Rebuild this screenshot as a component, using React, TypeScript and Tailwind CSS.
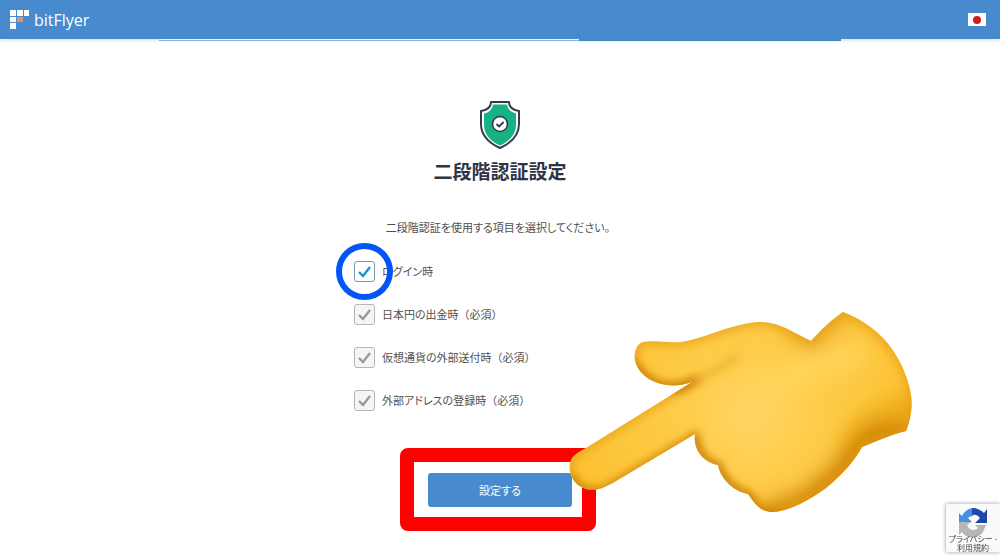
import React, {useState} from "react";

const STEPS = [
    {width: "w-[134px]", done: false},
    {width: "w-[146px]", done: false},
    {width: "w-[140px]", done: false},
    {width: "flex-1", done: true},
];

const OPTIONS = [
    {id: "login", label: "ログイン時", required: false},
    {id: "withdraw", label: "日本円の出金時", required: true},
    {id: "transfer", label: "仮想通貨の外部送付時", required: true},
    {id: "address", label: "外部アドレスの登録時", required: true},
];

const HAND = "M643 342 C655 340 666 343 681 342 C703 339 728 325 757 322 C780 321 793 333 811 341 C820 331 831 320 843 312 C862 319 882 333 894 352 C907 372 914 396 911 412 C910 420 908 426 906 431 C890 435 877 441 862 447 C855 460 843 474 826 488 C807 502 786 512 771 512 C760 511 755 504 748 494 C736 492 721 481 718 465 C704 462 693 451 695 434 L611 484 C602 489 592 492 583 488 C573 484 568 472 570 463 C572 455 579 452 586 448 L692 382 C675 388 661 386 649 379 C639 373 633 362 635 353 C636 347 639 343 643 342 Z";

const LogoMark = () => (
    <svg width="20" height="20" viewBox="0 0 20 20" fill="#fff">
        <path d="M0 0h6v6H0zM7 0h6v6H7zM14 0h5v6h-5zM0 7h6v5H0zM0 13h6v6H0z"/>
        <path d="M7 7h6v5H7z" fill="#e0936b"/>
    </svg>
);

const Shield = () => (
    <svg width="40" height="48" viewBox="0 0 40 48" fill="none">
        <path d="M11 1h18c0 5 4 8 10 9v13c0 11-8 19-19 24C9 42 1 34 1 23V10c6-1 10-4 10-9Z"
              fill="#fff" stroke="#333c4c" strokeWidth="2" strokeLinejoin="round"/>
        <path d="M13 3.500h14c1 5 4 8 9 9V24c0 9-6 16-16 20.500C10 40 4 33 4 24V12.500c5-1 8-4 9-9Z" fill="#16b284"/>
        <circle cx="20" cy="23" r="7.5" fill="#fff" stroke="#333c4c" strokeWidth="1.6"/>
        <path d="m16.5 23 2.600 2.500 4.500-4.500" stroke="#333c4c" strokeWidth="1.8"/>
    </svg>
);

const Hand = () => (
    <svg width="360" height="220" viewBox="560 300 360 220" aria-hidden="true"
         className="pointer-events-none absolute left-[132px] -top-[173px] z-10 max-w-none">
        <defs>
            <radialGradient id="skin" gradientUnits="userSpaceOnUse" cx="750" cy="415" r="175">
                <stop offset="0" stopColor="#ffd464"/>
                <stop offset="0.4" stopColor="#fecc48"/>
                <stop offset="1" stopColor="#fcc134"/>
            </radialGradient>
            <clipPath id="handClip"><path d={HAND}/></clipPath>
            <filter id="soft" filterUnits="userSpaceOnUse" x="540" y="280" width="400" height="260">
                <feGaussianBlur stdDeviation="4"/>
            </filter>
            <filter id="softer" filterUnits="userSpaceOnUse" x="540" y="280" width="400" height="260">
                <feGaussianBlur stdDeviation="11"/>
            </filter>
        </defs>
        <path d={HAND} fill="url(#skin)"/>
        <g clipPath="url(#handClip)" fill="none" strokeLinecap="round">
            <g filter="url(#softer)">
                <path d="M755 395 C790 375 825 365 855 355" stroke="#ffd55c" strokeWidth="26"/>
                <path d="M912 438 C890 440 874 444 862 453 C848 482 805 518 771 520" stroke="#c97800" strokeWidth="32"/>
                <path d="M852 437 C868 420 890 408 920 402" stroke="#e5a011" strokeWidth="14"/>
                <path d="M790 322 L811 343 L845 308" stroke="#dd9c17" strokeWidth="12"/>
            </g>
            <path d={HAND} stroke="#e5a017" strokeWidth="6" filter="url(#soft)"/>
            <path d="M571 478 C578 495 598 496 613 488 L695 439 C697 454 706 464 718 467 C724 482 736 493 749 496 C756 511 763 516 777 515"
                  stroke="#c87b08" strokeWidth="7" filter="url(#soft)"/>
            <path d="M634 364 C642 380 661 391 682 387 L696 380" stroke="#c97b08" strokeWidth="8" filter="url(#soft)"/>
            <path d="M696 379 C710 374 724 366 736 357" stroke="#e9aa25" strokeWidth="5" filter="url(#soft)"/>
        </g>
    </svg>
);

const RecaptchaMark = () => (
    <svg width="30" height="30" viewBox="0 0 30 30" className="shrink-0">
        <path d="M15 0v8a7 7 0 0 0-5 2l4 4H1V5l3 3A14 14 0 0 1 15 0Z" fill="#4a90e2"/>
        <path d="M14 0c5 0 9 2 12 5l3-4v14H17l5-5c-2-3-5-4-8-3Z" fill="#1f47aa"/>
        <path d="M1 14h12l-4 3c2 5 7 7 11 3l-3-3h11l-3 7C20 32 8 31 4 24l-3 3Z" fill="#b5b6b8"/>
    </svg>
);

const CheckRow = ({option}: { option: typeof OPTIONS[number] }) => {
    const [checked, setChecked] = useState(true);

    return (
        <div className="flex items-start gap-[7px]">
            <div className="relative size-[21px]">
                <input id={option.id}
                       type="checkbox"
                       checked={checked}
                       disabled={option.required}
                       onChange={() => setChecked(!checked)}
                       className="block size-full appearance-none rounded-[3px] border border-[#7898b4] bg-white disabled:border-[#b5b5b5] disabled:bg-[#f5f5f5]"/>
                {checked && (
                    <svg viewBox="0 0 21 21" fill="none" strokeWidth="2.4"
                         className={`pointer-events-none absolute inset-0 ${option.required ? "stroke-[#999999]" : "stroke-[#1696cf]"}`}>
                        <path d="m5 11 4 4 7-9"/>
                    </svg>
                )}
                {!option.required && (
                    <span className="pointer-events-none absolute -inset-[18px] z-10 rounded-full border-6 border-[#0555f5]"/>
                )}
            </div>
            <label htmlFor={option.id} className="pt-0.5">
                {option.label}
                {option.required && <span className="[font-feature-settings:normal]">（必須）</span>}
            </label>
        </div>
    );
};

export default function App() {
    return (
        <div className="relative min-h-screen overflow-hidden bg-white font-['Noto_Sans_CJK_JP',sans-serif] text-[11px] leading-4 text-[#505050] [font-feature-settings:'palt']">
            <header className="flex h-[39px] items-center justify-between bg-[#478bce] pr-3.5 pl-2.5 shadow-[0_1px_4px_rgba(0,0,0,0.15)]">
                <a href="/" className="flex items-center gap-1 font-['Open_Sans',sans-serif] text-base leading-5 font-medium text-white">
                    <LogoMark/>
                    bitFlyer
                </a>
                <button type="button" aria-label="日本語" className="flex h-[13px] w-[18px] items-center justify-center bg-white">
                    <span className="size-2 rounded-full bg-[#d01c1f]"/>
                </button>
            </header>

            <div className="relative mx-auto flex h-0.5 max-w-[682px]">
                {STEPS.map((step, i) => (
                    <div key={i} className={`${step.width} ${step.done ? "bg-[#4785c3]" : "border-b border-[#8db6dd] bg-[#e8f2fb]"}`}/>
                ))}
            </div>

            <main className="flex flex-col items-center pt-[60px]">
                <Shield/>
                <h1 className="mt-1.5 text-[19px] leading-8 font-bold text-[#2d3446]">二段階認証設定</h1>
                <p className="mt-8 pr-1">二段階認証を使用する項目を選択してください。</p>

                <div className="mt-[26px] flex w-[292px] flex-col gap-[22px]">
                    {OPTIONS.map(option => <CheckRow key={option.id} option={option}/>)}
                </div>

                <div className="relative mt-[62px]">
                    <button type="button" className="h-[34px] w-36 rounded-[3px] bg-[#478bce] text-white">設定する</button>
                    <span className="pointer-events-none absolute -top-[25px] -right-6 -bottom-6 -left-7 rounded-lg border-[14px] border-[#fe0000]"/>
                    <Hand/>
                </div>
            </main>

            <aside className="fixed right-0 bottom-2 flex h-12 w-[54px] flex-col items-center overflow-hidden rounded-l-xs bg-[#fafafa] pt-1 shadow-[0_0_4px_#999999]">
                <RecaptchaMark/>
                <div className="relative -mt-1 flex flex-col items-center text-[8px] leading-[9px] whitespace-nowrap text-[#444444]">
                    <a href="#privacy">プライバシー -</a>
                    <a href="#terms">利用規約</a>
                </div>
            </aside>
        </div>
    );
}
